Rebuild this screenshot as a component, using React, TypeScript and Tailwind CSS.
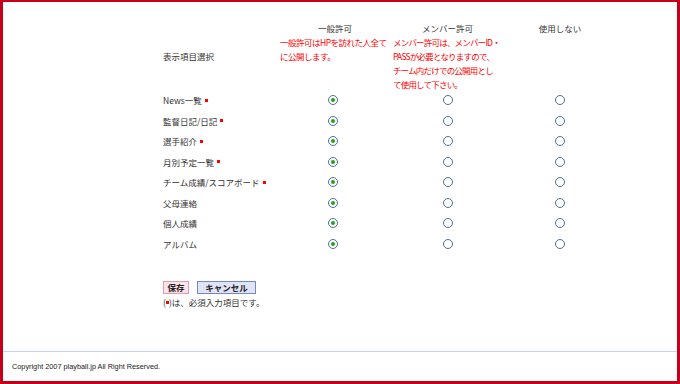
import React from 'react';

const items = [
  { label: 'News一覧', required: true },
  { label: '監督日記/日記', required: true },
  { label: '選手紹介', required: true },
  { label: '月別予定一覧', required: true },
  { label: 'チーム成績/スコアボード', required: true },
  { label: '父母連絡', required: false },
  { label: '個人成績', required: false },
  { label: 'アルバム', required: false },
];

function Radio({ checked }: { checked?: boolean }) {
  return (
    <span className="flex w-[10px] h-[10px] items-center justify-center rounded-full border border-[#4f6f96] bg-white">
      {checked && <span className="w-[4px] h-[4px] rounded-full bg-[#1fa31f]" />}
    </span>
  );
}

function Dot() {
  return <span className="inline-block w-[3px] h-[3px] bg-[#ff0000]" />;
}

export default function App() {
  return (
    <div
      className="w-[680px] h-[384px] flex flex-col bg-white border-[#c4001a] border-t-[2px] border-l-[3px] border-r-[3px] border-b-[3px] text-[8.5px] leading-[14px] text-[#333]"
      style={{ fontFamily: '"Noto Sans CJK JP", "Liberation Sans", sans-serif' }}
    >
      <div className="pl-[160px] pt-[19px]">
        {/* header */}
        <div className="grid grid-cols-[116px_112px_113px_112px] h-[69px]">
          <div className="flex items-center">表示項目選択</div>
          <div className="flex flex-col">
            <div className="text-center">一般許可</div>
            <div className="pl-[1px] text-[#ff0000] whitespace-nowrap tracking-[-0.5px]">
              一般許可はHPを訪れた人全て
              <br />
              に公開します。
            </div>
          </div>
          <div className="flex flex-col">
            <div className="text-center">メンバー許可</div>
            <div className="pl-[2px] text-[#ff0000] whitespace-nowrap tracking-[-0.8px]">
              メンバー許可は、メンバーID・
              <br />
              PASSが必要となりますので、
              <br />
              チーム内だけでの公開用とし
              <br />
              て使用して下さい。
            </div>
          </div>
          <div className="text-center">使用しない</div>
        </div>

        {/* rows */}
        {items.map((it) => (
          <div key={it.label} className="grid grid-cols-[116px_112px_113px_112px] h-[20.5px] items-center">
            <div className="flex items-center gap-[3px]">
              <span>{it.label}</span>
              {it.required && <Dot />}
            </div>
            <div className="flex justify-center pr-[4px]">
              <Radio checked />
            </div>
            <div className="flex justify-center">
              <Radio />
            </div>
            <div className="flex justify-center">
              <Radio />
            </div>
          </div>
        ))}

        {/* buttons */}
        <div className="flex gap-[8px] mt-[27px]">
          <button className="w-[26px] h-[13px] flex items-center justify-center border border-[#e79aae] bg-[#fde3ea] font-bold text-[#222] leading-none">
            保存
          </button>
          <button className="w-[59px] h-[13px] flex items-center justify-center border border-[#7587c4] bg-[#dfe4f6] font-bold text-[#222] leading-none">
            キャンセル
          </button>
        </div>
        <div className="flex items-center mt-[1px]">
          (<Dot />)は、必須入力項目です。
        </div>
      </div>

      <div className="mt-auto border-t border-[#c6d3ea] h-[30px] pl-[9px] pt-[6px]">
        <span
          className="text-[7.3px] text-[#222]"
          style={{ fontFamily: '"Liberation Sans", sans-serif' }}
        >
          Copyright 2007 playball.jp All Right Reserved.
        </span>
      </div>
    </div>
  );
}
